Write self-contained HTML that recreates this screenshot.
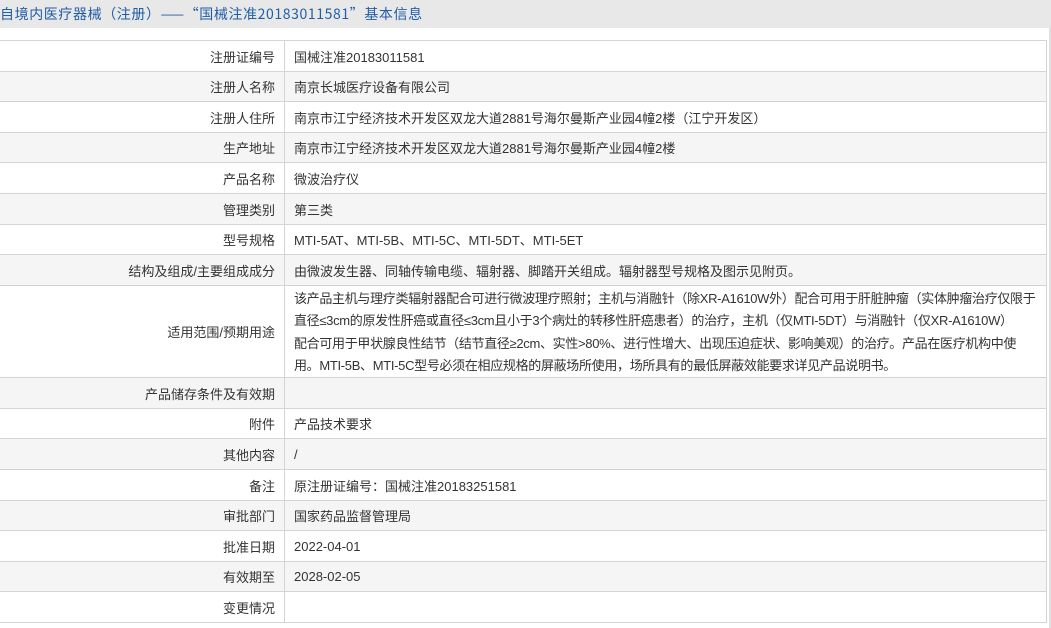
<!DOCTYPE html>
<html><head><meta charset="utf-8"><style>
*{margin:0;padding:0;box-sizing:border-box}
body{width:1051px;height:628px;overflow:hidden;background:#fff;font-family:"Liberation Sans","Noto Sans CJK SC",sans-serif;font-size:13px;color:#333}
.title{height:28px;background:#e8e8e8;color:#1f5da6;font-size:14px;line-height:28px;white-space:nowrap;font-family:"Noto Sans CJK SC",sans-serif;letter-spacing:0.6px}
.tbl{position:absolute;left:-1px;top:40px;width:1048px;border-top:1px solid #d4d4d4;border-right:1px solid #d4d4d4}
.r{display:flex;border-bottom:1px solid #d4d4d4}
.r:nth-child(even){background:#f5f5f5}
.l{width:286px;flex:0 0 286px;border-right:1px solid #d4d4d4;text-align:right;padding-right:9px;display:flex;align-items:center;justify-content:flex-end}
.v{padding-left:9px;display:flex;align-items:center;white-space:nowrap}
.m{line-height:22.5px;padding-top:2px;letter-spacing:-0.32px}
.sb{position:absolute;left:1049px;top:28px;width:2px;height:600px;background:#e0e0e0}
</style></head><body>
<div class="title">自境内医疗器械（注册）——“国械注准20183011581”基本信息</div>
<div class="tbl">
<div class="r" style="height:31px"><div class="l">注册证编号</div><div class="v">国械注准20183011581</div></div>
<div class="r" style="height:30px"><div class="l">注册人名称</div><div class="v">南京长城医疗设备有限公司</div></div>
<div class="r" style="height:31px"><div class="l">注册人住所</div><div class="v">南京市江宁经济技术开发区双龙大道2881号海尔曼斯产业园4幢2楼（江宁开发区）</div></div>
<div class="r" style="height:30px"><div class="l">生产地址</div><div class="v">南京市江宁经济技术开发区双龙大道2881号海尔曼斯产业园4幢2楼</div></div>
<div class="r" style="height:31px"><div class="l">产品名称</div><div class="v">微波治疗仪</div></div>
<div class="r" style="height:31px"><div class="l">管理类别</div><div class="v">第三类</div></div>
<div class="r" style="height:30px"><div class="l">型号规格</div><div class="v">MTI-5AT、MTI-5B、MTI-5C、MTI-5DT、MTI-5ET</div></div>
<div class="r" style="height:31px"><div class="l">结构及组成/主要组成成分</div><div class="v">由微波发生器、同轴传输电缆、辐射器、脚踏开关组成。辐射器型号规格及图示见附页。</div></div>
<div class="r" style="height:92px"><div class="l">适用范围/预期用途</div><div class="v m">该产品主机与理疗类辐射器配合可进行微波理疗照射；主机与消融针（除XR-A1610W外）配合可用于肝脏肿瘤（实体肿瘤治疗仅限于<br>直径≤3cm的原发性肝癌或直径≤3cm且小于3个病灶的转移性肝癌患者）的治疗，主机（仅MTI-5DT）与消融针（仅XR-A1610W）<br>配合可用于甲状腺良性结节（结节直径≥2cm、实性&gt;80%、进行性增大、出现压迫症状、影响美观）的治疗。产品在医疗机构中使<br>用。MTI-5B、MTI-5C型号必须在相应规格的屏蔽场所使用，场所具有的最低屏蔽效能要求详见产品说明书。</div></div>
<div class="r" style="height:31px"><div class="l">产品储存条件及有效期</div><div class="v"></div></div>
<div class="r" style="height:30px"><div class="l">附件</div><div class="v">产品技术要求</div></div>
<div class="r" style="height:31px"><div class="l">其他内容</div><div class="v">/</div></div>
<div class="r" style="height:31px"><div class="l">备注</div><div class="v">原注册证编号：国械注准20183251581</div></div>
<div class="r" style="height:30px"><div class="l">审批部门</div><div class="v">国家药品监督管理局</div></div>
<div class="r" style="height:31px"><div class="l">批准日期</div><div class="v">2022-04-01</div></div>
<div class="r" style="height:30px"><div class="l">有效期至</div><div class="v">2028-02-05</div></div>
<div class="r" style="height:31px"><div class="l">变更情况</div><div class="v"></div></div>
</div>
<div class="sb"></div>
</body></html>
